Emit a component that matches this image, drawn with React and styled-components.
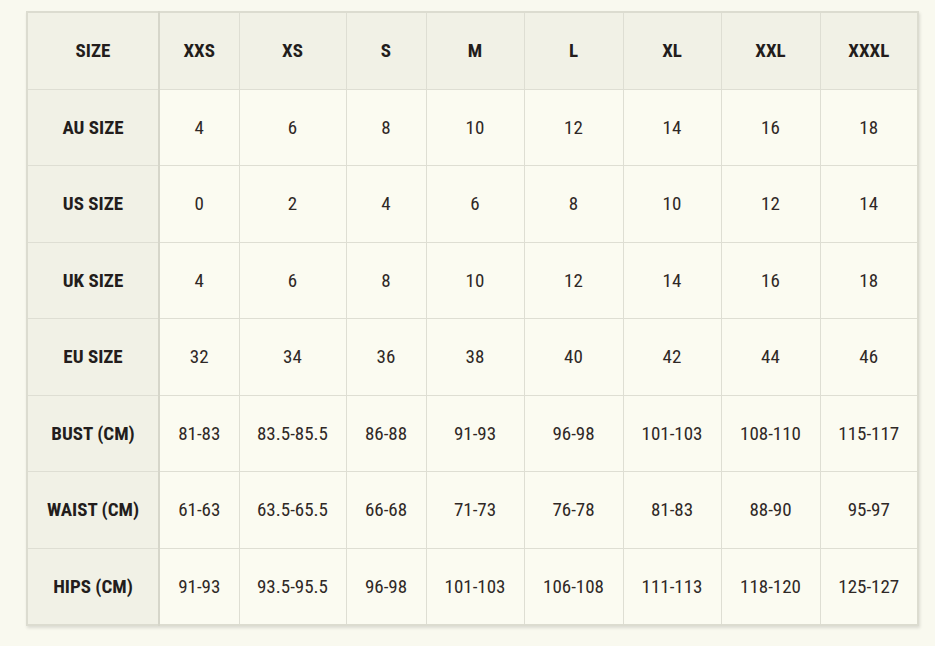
import React from 'react';
import styled, { createGlobalStyle } from 'styled-components';

const GlobalStyle = createGlobalStyle`
  body {
    margin: 0;
    background: #f9f9ef;
    font-family: 'Roboto Condensed', 'Liberation Sans Narrow', 'Liberation Sans', sans-serif;
  }
`;

const Page = styled.div`
  padding: 11px 16px 20px 26px;
`;

const Table = styled.table`
  border-collapse: collapse;
  border: 2px solid #dcdcd0;
  box-shadow: 1px 2px 3px rgba(0, 0, 0, 0.12);
  table-layout: fixed;
  width: 893px;
  background: #fbfbf1;
  color: #2b2422;
`;

const Cell = styled.td`
  height: 75.5px;
  padding: 0;
  text-align: center;
  font-size: 19px;
  border: 1px solid #deded3;
  background: ${(p) => (p.$head ? '#f1f1e6' : '#fbfbf1')};
  font-weight: ${(p) => (p.$head ? 700 : 400)};
  color: ${(p) => (p.$head ? '#231d1c' : '#2f2826')};
  border-right: ${(p) => (p.$first ? '2px solid #d6d6ca' : '1px solid #deded3')};
`;

const widths = [132, 80, 107, 80, 98, 99, 98, 99, 98];

const header = ['SIZE', 'XXS', 'XS', 'S', 'M', 'L', 'XL', 'XXL', 'XXXL'];

const rows = [
  ['AU SIZE', '4', '6', '8', '10', '12', '14', '16', '18'],
  ['US SIZE', '0', '2', '4', '6', '8', '10', '12', '14'],
  ['UK SIZE', '4', '6', '8', '10', '12', '14', '16', '18'],
  ['EU SIZE', '32', '34', '36', '38', '40', '42', '44', '46'],
  ['BUST (CM)', '81-83', '83.5-85.5', '86-88', '91-93', '96-98', '101-103', '108-110', '115-117'],
  ['WAIST (CM)', '61-63', '63.5-65.5', '66-68', '71-73', '76-78', '81-83', '88-90', '95-97'],
  ['HIPS (CM)', '91-93', '93.5-95.5', '96-98', '101-103', '106-108', '111-113', '118-120', '125-127'],
];

const App = () => (
  <Page>
    <GlobalStyle />
    <Table>
      <colgroup>
        {widths.map((w, i) => (
          <col key={i} style={{ width: w }} />
        ))}
      </colgroup>
      <tbody>
        <tr>
          {header.map((h, i) => (
            <Cell key={h} $head $first={i === 0}>{h}</Cell>
          ))}
        </tr>
        {rows.map((row) => (
          <tr key={row[0]}>
            {row.map((v, i) => (
              <Cell key={i} $head={i === 0} $first={i === 0}>{v}</Cell>
            ))}
          </tr>
        ))}
      </tbody>
    </Table>
  </Page>
);

export default App;
